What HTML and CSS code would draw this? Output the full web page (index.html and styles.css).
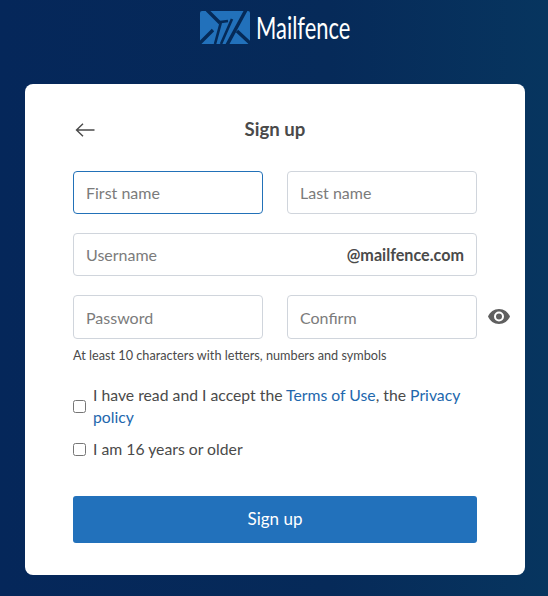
FILE: index.html
```html
<!DOCTYPE html>
<html lang="en">
<head>
<meta charset="utf-8">
<title>Mailfence - Sign up</title>
<link rel="stylesheet" href="styles.css">
</head>
<body>
<div class="page">
  <header class="brand">
    <svg class="brand-mark" width="50" height="33" viewBox="0 0 50 33" aria-hidden="true">
      <path d="M2 0H48Q50 0 50 2V31Q50 33 48 33H2Q0 33 0 31V2Q0 0 2 0Z" fill="#2271bb"/>
      <path d="M7 -1L20 12M-1 33L13 19M51 33L37 20M46 -1L27 34" stroke="#052a58" stroke-width="3.4" fill="none"/>
      <path d="M15 33L21 11L28 10M21 33L32 8" stroke="#052a58" stroke-width="2.6" fill="none"/>
    </svg>
    <span class="brand-name">Mailfence</span>
  </header>
  <main class="card">
    <div class="card-head">
      <svg class="back" width="20" height="14" viewBox="0 0 20 14" aria-hidden="true">
        <path d="M19.5 7H1.5M8 .7L1.5 7L8 13.3" fill="none" stroke="#4a4a4a" stroke-width="1.4"/>
      </svg>
      <h1>Sign up</h1>
    </div>
    <form class="form">
      <div class="row">
        <input class="field field-focus" type="text" placeholder="First name">
        <input class="field" type="text" placeholder="Last name">
      </div>
      <div class="username">
        <input class="username-input" type="text" placeholder="Username">
        <span class="domain">@mailfence.com</span>
      </div>
      <div class="row password-row">
        <input class="field" type="password" placeholder="Password">
        <input class="field" type="password" placeholder="Confirm">
        <svg class="eye" width="22" height="15" viewBox="0 0 22 15" aria-hidden="true">
          <path fill-rule="evenodd" fill="#5f5f5f" d="M11 0C6 0 1.900 3.100 0 7.500C1.900 11.900 6 15 11 15S20.100 11.900 22 7.500C20.100 3.100 16 0 11 0ZM11 12.500A5 5 0 1 1 11 2.500A5 5 0 0 1 11 12.500ZM11 4.500A3 3 0 1 0 11 10.500A3 3 0 0 0 11 4.500Z"/>
        </svg>
      </div>
      <p class="hint">At least 10 characters with letters, numbers and symbols</p>
      <label class="check check-first">
        <input type="checkbox">
        <span>I have read and I accept the <a href="#">Terms of Use</a>, the <a href="#">Privacy policy</a></span>
      </label>
      <label class="check">
        <input type="checkbox">
        <span>I am 16 years or older</span>
      </label>
      <button class="submit" type="button">Sign up</button>
    </form>
  </main>
</div>
</body>
</html>
```
FILE: styles.css
```css
* { box-sizing: border-box; }
html, body { height: 100%; }
body {
  margin: 0;
  font-family: Lato, "Liberation Sans", sans-serif;
  color: #4a4a4a;
  background: linear-gradient(90deg, #05275a 0%, #062a59 60%, #07355f 100%);
  overflow: hidden;
}
.page {
  display: flex;
  flex-direction: column;
  align-items: center;
  padding-top: 11px;
}
.brand {
  display: flex;
  align-items: center;
  gap: 6px;
  height: 33px;
  margin-left: 2px;
}
.brand-name {
  display: block;
  width: 95px;
  font-size: 30px;
  line-height: 33px;
  color: #fff;
  white-space: nowrap;
  transform: scaleX(.73);
  transform-origin: left center;
}
.card {
  width: 500px;
  height: 491px;
  margin: 40px 0 0 2px;
  padding: 0 48px;
  background: #fff;
  border-radius: 8px;
}
.card-head {
  display: flex;
  align-items: center;
  justify-content: center;
  height: 87px;
  position: relative;
}
.back { position: absolute; left: 2px; top: 39px; }
h1 {
  margin: 2px 0 0;
  font-size: 18.6px;
  font-weight: 700;
  color: #4a4a4a;
}
.form { display: flex; flex-direction: column; }
.row {
  display: flex;
  gap: 24px;
  position: relative;
}
.field, .username-input {
  font: 400 16px Lato, sans-serif;
  color: #4a4a4a;
}
.field {
  width: 190px;
  height: 43px;
  padding: 0 12px;
  border: 1px solid #d0d5dc;
  border-radius: 4px;
  outline: none;
}
.field-focus { border-color: #2271b8; }
::placeholder { color: #7b7b7b; opacity: 1; }
.username {
  display: flex;
  align-items: center;
  height: 43px;
  margin-top: 19px;
  padding: 0 12px;
  border: 1px solid #d0d5dc;
  border-radius: 4px;
}
.username-input {
  flex: 1;
  min-width: 0;
  padding: 0;
  border: 0;
  outline: none;
}
.domain { font-size: 16.15px; font-weight: 700; color: #4a4a4a; }
.password-row { margin-top: 19px; }
.password-row .field { height: 44px; }
.eye { position: absolute; left: 415px; top: 14px; }
.hint {
  margin: 8px 0 0;
  font-size: 12.7px;
  line-height: 16px;
  color: #4a4a4a;
}
.check {
  display: flex;
  align-items: center;
  gap: 7px;
  margin-top: 10px;
  font-size: 15.75px;
  line-height: 22px;
  color: #4a4a4a;
}
.check-first { margin-top: 21px; }
.check input {
  flex: none;
  width: 13px;
  height: 13px;
  margin: 0;
}
.check a { color: #2267ad; text-decoration: none; }
.submit {
  height: 47px;
  margin-top: 36px;
  padding: 0 0 2px;
  border: 0;
  border-radius: 3px;
  background: #2271bb;
  color: #fff;
  font: 400 17px Lato, sans-serif;
}
```
